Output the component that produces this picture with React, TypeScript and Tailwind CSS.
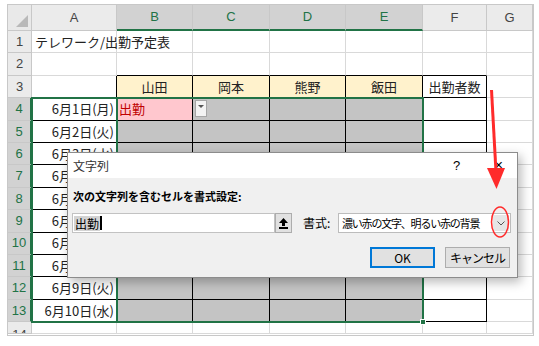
import React from "react";

const COLS = ["", "A", "B", "C", "D", "E", "F", "G"];
const ROWS = 14;

const dates = [
  "6月1日(月)",
  "6月2日(火)",
  "6月3日(水)",
  "6月4日(木)",
  "6月5日(金)",
  "6月6日(土)",
  "6月7日(日)",
  "6月8日(月)",
  "6月9日(火)",
  "6月10日(水)",
];

const names: Record<number, string> = { 2: "山田", 3: "岡本", 4: "熊野", 5: "飯田", 6: "出勤者数" };

const inBlack = (r: number, c: number) => r >= 3 && r <= 13 && c >= 1 && c <= 6;

function HeaderCell({ c }: { c: number }) {
  if (c === 0) {
    return (
      <div className="relative bg-[#e9e9e9] border-r border-b border-[#c8c8c8]">
        <svg className="absolute right-[3px] bottom-[3px]" width="12" height="12" viewBox="0 0 12 12">
          <polygon points="12,0 12,12 0,12" fill="#b9b9b9" />
        </svg>
      </div>
    );
  }
  const sel = c >= 2 && c <= 5;
  return (
    <div
      className={
        "flex items-center justify-center text-[13px] font-['Liberation_Sans',sans-serif] border-r border-r-[#c8c8c8] " +
        (sel
          ? "bg-[#d2d2d2] text-[#217346] border-b-2 border-b-[#217346]"
          : "bg-[#ebebeb] text-[#444] border-b border-b-[#c8c8c8]")
      }
    >
      {COLS[c]}
    </div>
  );
}

function RowHeader({ r }: { r: number }) {
  const sel = r >= 4 && r <= 13;
  // last row is cut off by the window, so its number sits high and gets clipped
  const place = r === ROWS ? "items-start pt-[3px] overflow-hidden" : "items-center";
  return (
    <div
      className={
        `flex ${place} justify-center text-[13px] font-['Liberation_Sans',sans-serif] border-b border-b-[#c8c8c8] ` +
        (sel
          ? "bg-[#d2d2d2] text-[#217346] border-r-2 border-r-[#217346]"
          : "bg-[#ebebeb] text-[#444] border-r border-r-[#c8c8c8]")
      }
    >
      {r}
    </div>
  );
}

function Cell({ r, c }: { r: number; c: number }) {
  const right = inBlack(r, c) ? "border-r-black" : "border-r-[#d9d9d9]";
  const bottom = inBlack(r, c) || (r === 2 && c >= 2 && c <= 6) ? "border-b-black" : "border-b-[#d9d9d9]";

  let bg = "";
  if (r === 3 && c >= 2 && c <= 5) bg = "bg-[#fff2cc]";
  else if (r === 4 && c === 2) bg = "bg-[#ffc7ce]";
  else if (r >= 4 && r <= 13 && c >= 2 && c <= 5) bg = "bg-[#c4c4c4]";

  let content: React.ReactNode = null;
  let align = "justify-start";
  if (r === 1 && c === 1) {
    content = <span className="pl-[3px] whitespace-nowrap">テレワーク/出勤予定表</span>;
  } else if (r === 3 && names[c]) {
    content = names[c];
    align = "justify-center";
  } else if (c === 1 && r >= 4 && r <= 13) {
    content = <span className="pr-[2px]">{dates[r - 4]}</span>;
    align = "justify-end";
  } else if (r === 4 && c === 2) {
    content = <span className="pl-[2px] text-[#c00000]">出勤</span>;
  } else if (r === 4 && c === 3) {
    content = (
      <div className="ml-[2px] w-[12px] h-[17px] bg-[#f3f3f3] border border-[#a6a6a6] flex justify-center pt-[4px]">
        <svg width="6" height="4" viewBox="0 0 6 4">
          <polygon points="0,0 6,0 3,3" fill="#555" />
        </svg>
      </div>
    );
  }

  return (
    <div
      className={`relative flex items-center ${align} ${bg} border-r border-b ${right} ${bottom} text-[13px] text-[#222] font-['Noto_Sans_CJK_JP',sans-serif] overflow-visible z-[1]`}
    >
      {content}
    </div>
  );
}

function Sheet() {
  const cells: React.ReactNode[] = [];
  for (let c = 0; c < COLS.length; c++) cells.push(<HeaderCell key={`h${c}`} c={c} />);
  for (let r = 1; r <= ROWS; r++) {
    cells.push(<RowHeader key={`r${r}`} r={r} />);
    for (let c = 1; c < COLS.length; c++) cells.push(<Cell key={`${r}-${c}`} r={r} c={c} />);
  }

  return (
    <div className="ml-[7px] mt-[4px] w-[527px] h-[332px] border border-[#c8c8c8] overflow-hidden grid">
      <div className="[grid-area:1/1] grid grid-cols-[24px_85px_76px_77px_76px_77px_64px_46px] grid-rows-[26px_repeat(13,22.4px)_12px]">
        {cells}
      </div>
      {/* selection frames */}
      <div className="[grid-area:1/1] grid grid-cols-[24px_85px_76px_77px_76px_77px_64px_46px] grid-rows-[26px_repeat(13,22.4px)_12px] pointer-events-none z-[2]">
        <div className="col-start-2 col-end-3 row-start-5 row-end-15 -m-px border-2 border-[#217346]" />
        <div className="relative col-start-3 col-end-7 row-start-5 row-end-15 -m-px border-2 border-[#217346]">
          <div className="absolute -right-[4px] -bottom-[4px] w-[6px] h-[6px] bg-[#217346] border border-white" />
        </div>
      </div>
    </div>
  );
}

function Dialog() {
  return (
    <div className="absolute left-[67px] top-[152px] w-[451px] h-[126px] border border-[#8c8c8c] bg-[#f0f0f0] shadow-[3px_4px_10px_rgba(0,0,0,0.28)] flex flex-col font-['Noto_Sans_CJK_JP',sans-serif] text-black z-10">
      <div className="h-[25px] bg-white flex items-center pl-[5px] text-[12px]">
        <span className="text-[#333]">文字列</span>
        <span className="ml-auto mr-[34px] text-[13px] font-['Liberation_Sans',sans-serif]">?</span>
        <span className="mr-[14px] text-[15px] font-['Liberation_Sans',sans-serif] font-light">×</span>
      </div>
      <div className="flex-1 flex flex-col px-[4px] pt-[10px]">
        <div className="ml-[1px] h-[16px] leading-[16px] text-[11px] font-bold">次の文字列を含むセルを書式設定:</div>
        <div className="flex items-center mt-[9px]">
          <div className="w-[203px] h-[20px] bg-white border border-[#c2c2c2] flex items-center pl-[1px]">
            <span className="bg-[#d3d3d3] text-[12px] leading-[15px] px-px">出勤</span>
            <span className="w-[2px] h-[14px] bg-black" />
          </div>
          <div className="w-[17px] h-[20px] bg-[#e1e1e1] border border-[#adadad] flex items-center justify-center">
            <svg width="9" height="11" viewBox="0 0 9 11">
              <polygon points="4.5,0 9,5 6,5 6,8 3,8 3,5 0,5" fill="#000" />
              <rect x="0" y="9" width="9" height="2" fill="#000" />
            </svg>
          </div>
          <span className="ml-[11px] w-[35px] text-[12px]">書式:</span>
          <div className="w-[173px] h-[20px] bg-white border border-[#bcbcbc] flex items-center">
            <span className="pl-[3px] text-[11px] tracking-[-1.2px] whitespace-nowrap">濃い赤の文字、明るい赤の背景</span>
            <div className="ml-auto mr-[1px] w-[16px] h-[16px] bg-[#e6e6e6] flex items-center justify-center">
              <svg width="8" height="5" viewBox="0 0 8 5">
                <polyline points="0.5,0.5 4,4 7.5,0.5" fill="none" stroke="#555" strokeWidth="1" />
              </svg>
            </div>
          </div>
        </div>
        <div className="flex justify-end gap-[10px] mt-[14px] pr-[3px]">
          <button className="w-[65px] h-[21px] bg-[#e1e1e1] border-2 border-[#0078d7] text-[12px] flex items-center justify-center">
            OK
          </button>
          <button className="w-[65px] h-[21px] bg-[#e1e1e1] border border-[#adadad] text-[12px] flex items-center justify-center tracking-[-1px]">
            キャンセル
          </button>
        </div>
      </div>
    </div>
  );
}

export default function App() {
  return (
    <div className="relative w-[539px] h-[346px] bg-white overflow-hidden">
      <Sheet />
      <Dialog />
      {/* annotation */}
      <svg className="absolute inset-0 pointer-events-none z-20" width="539" height="346" viewBox="0 0 539 346">
        <line x1="491.5" y1="90" x2="496" y2="172" stroke="#ff2b2b" strokeWidth="3" />
        <polygon points="487,168 505,168 496.5,189" fill="#ff2b2b" />
        <ellipse cx="500" cy="222" rx="8.5" ry="15" fill="none" stroke="#ff2b2b" strokeWidth="1.5" />
      </svg>
    </div>
  );
}
